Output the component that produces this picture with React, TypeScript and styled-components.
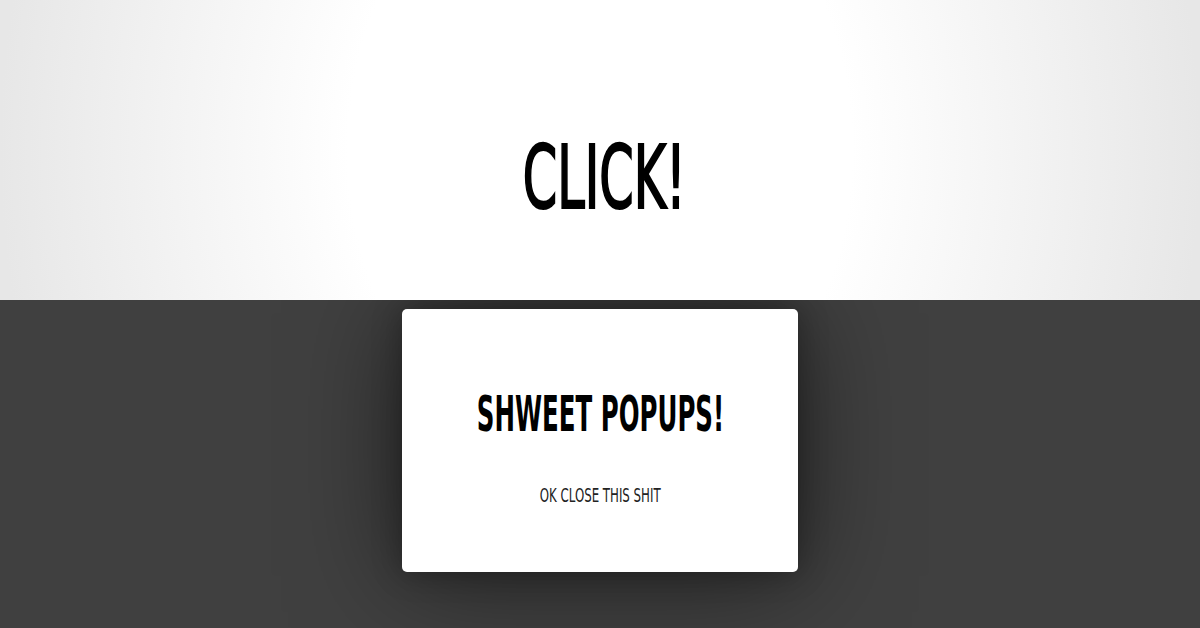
import React from 'react';
import styled, {createGlobalStyle} from "styled-components";

const GlobalStyle = createGlobalStyle`
  html, body {
    margin: 0;
    padding: 0;
    width: 1200px;
    height: 628px;
    overflow: hidden;
    font-family: "DejaVu Sans Condensed", "DejaVu Sans", sans-serif;
  }
`

export default function App() {
    return <>
        <GlobalStyle/>
        <StyledPage>
            <StyledTop>
                <StyledClick>CLICK!</StyledClick>
            </StyledTop>
            <StyledBottom>
                <StyledPopup>
                    <StyledTitle>SHWEET POPUPS!</StyledTitle>
                    <StyledClose type="button">OK CLOSE THIS SHIT</StyledClose>
                </StyledPopup>
            </StyledBottom>
        </StyledPage>
    </>;
}

const StyledPage = styled.div`
  width: 1200px;
  height: 628px;
  display: flex;
  flex-direction: column;
`

const StyledTop = styled.section`
  height: 300px;
  box-sizing: border-box;
  padding: 56px 0 0 8px;
  display: flex;
  justify-content: center;
  align-items: center;
  background: radial-gradient(ellipse 50% 250% at 50% 50%, #ffffff 42%, #e7e7e7 100%);
`

const StyledClick = styled.h1`
  margin: 0;
  font-size: 87px;
  font-weight: normal;
  color: #000;
  -webkit-text-stroke: 2.2px #000;
  transform: scaleX(0.63);
  white-space: nowrap;
`

const StyledBottom = styled.section`
  flex: 1;
  overflow: hidden;
  display: flex;
  justify-content: center;
  align-items: flex-start;
  background-color: #404040;
  padding-top: 9px;
`

const StyledPopup = styled.div`
  width: 396px;
  height: 263px;
  background-color: #fff;
  border-radius: 5px;
  box-shadow: 0 0 30px rgba(0, 0, 0, 0.3), 0 4px 110px rgba(0, 0, 0, 0.55);
  display: flex;
  flex-direction: column;
  align-items: center;
`

const StyledTitle = styled.h2`
  margin: 77px 0 0 0;
  font-size: 49px;
  font-weight: bold;
  color: #000;
  transform: scaleX(0.556);
  white-space: nowrap;
`

const StyledClose = styled.button`
  margin-top: 40px;
  border: none;
  background: transparent;
  font-family: "DejaVu Sans Condensed", "DejaVu Sans", sans-serif;
  font-size: 20px;
  color: #222;
  transform: scaleX(0.655);
  white-space: nowrap;
  padding: 0;
`
